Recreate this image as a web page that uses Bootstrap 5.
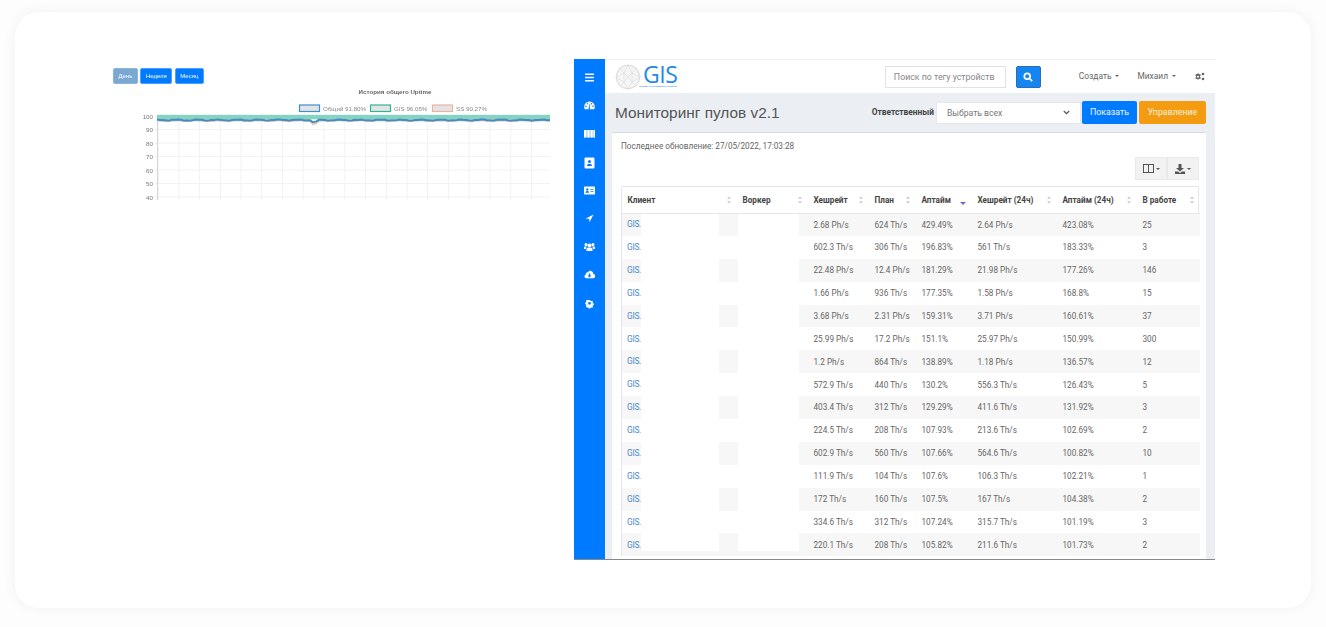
<!DOCTYPE html>
<html lang="ru">
<head>
    <meta charset="UTF-8">
    <meta name="viewport" content="width=device-width, initial-scale=1.0">
    <title>Мониторинг пулов</title>
    <link href="https://cdn.jsdelivr.net/npm/bootstrap@5.3.2/dist/css/bootstrap.min.css" rel="stylesheet">
    <style>
        html, body { height: 100%; overflow: hidden; }
        body { background: #fdfdfd; font-family: Roboto, "Liberation Sans", sans-serif; }
        .sheet { margin: 12px 15px 0; width: 1296px; height: 596px; background: #fff; border-radius: 24px; box-shadow: 0 0 14px rgba(0,0,0,.05); padding: 47px 95px 0 98px; gap: 24px; }
        /* left chart */
        .uptime { width: 437px; font-family: "Liberation Sans", sans-serif; filter: blur(.35px); padding-top: 9px; }
        .range-row { gap: 2.5px; }
        .range-btn { font-size: 6px; line-height: 13px; padding: 1px 4.5px; height: 15.5px; border-radius: 2px; background: #007bff; color: #fff; border: 1px solid #4d9fff; }
        .range-btn.off { background: #7ba7d3; border-color: #8db4dc; }
        .uptime svg { display: block; margin-top: -1px; }
        /* right app */
        .app { width: 641px; height: 501px; overflow: hidden; font-size: 8.2px; color: #666; border-bottom: 1px solid #888; }
        .rail { width: 31px; background: #007bff; padding-top: 11px; gap: 13.2px; }
        .rail svg { width: 11px; height: 15px; fill: #fff; display: block; }
        .main-col { background: #ebeff4; min-width: 0; }
        .topbar { height: 34px; background: #fff; border-top: 1px solid #eee; padding: 0 10px; }
        .logo-text { font-family: "Open Sans", sans-serif; font-size: 23px; line-height: 17px; height: 17px; color: #2389e8; letter-spacing: -.5px; margin: -4px 0 0 2px; }
        .logo-sub { position: absolute; left: 24px; top: 21px; font-size: 2.5px; line-height: 3px; color: #2389e8; white-space: nowrap; }
        .tag-search { width: 121px; height: 22px; border: 1px solid #dfe3e8; padding: 0 8px; font-size: 8.8px; line-height: 20px; color: #888; }
        .search-btn { width: 25px; height: 22px; background: #1585f2; border-radius: 2px; border: 1px solid #2a6fb5; margin-left: 10px; }
        .top-link { color: #666; font-size: 8.4px; }
        .top-link::after { content: ""; display: inline-block; border: 2.5px solid transparent; border-top-color: #666; border-bottom: 0; margin-left: 4px; vertical-align: 2px; }
        .link-create { margin-left: 38px; }
        .link-user { margin-left: 18px; }
        .gear-top { margin-left: 19px; }
        .title-row { height: 39px; padding: 0 9px 0 10px; }
        .page-title { font-family: "Liberation Sans", sans-serif; font-size: 15.4px; font-weight: 400; color: #555; margin: 0; line-height: 1; }
        .resp-label { font-size: 8.4px; font-weight: 700; color: #444; margin-right: 2px; }
        .resp-select { width: 145px; height: 22px; background: #fff; border: 1px solid #e4e7eb; padding: 0 10px; font-size: 8.6px; line-height: 20px; color: #777; }
        .act-btn { height: 23px; width: 55px; border-radius: 2px; font-size: 8.8px; line-height: 23px; text-align: center; color: #f2f7ff; background: #007bff; margin-left: 1px; }
        .act-btn.orange { background: #f39c12; width: 67px; margin-left: 2px; color: #fdf0dc; }
        .sheet-card { margin: 0 9px 0 7px; background: #fff; border-top: 1px solid #d8dce1; padding: 7px 7px 0 9px; position: relative; flex: 1; overflow: hidden; }
        .stamp { line-height: 12px; }
        .tool-btns { height: 23px; margin: 5px 0 6px; }
        .tool-btn { height: 23px; width: 32px; background: #f2f2f2; border: 1px solid #e9e9e9; display: flex; align-items: center; justify-content: center; gap: 2px; }
        .tool-btn svg { fill: #555; display: block; }
        .tool-caret { border: 2px solid transparent; border-top-color: #555; border-bottom: 0; }
        .pool-wrap { position: relative; border: 1px solid #e6e6e6; border-bottom: 0; border-radius: 2px 2px 0 0; }
        .pool-table { width: 578px; table-layout: fixed; margin: 0; font-size: 8.2px; }
        .pool-table th { height: 26px; padding: 0 5.500px; font-size: 8.2px; font-weight: 700; color: #444; vertical-align: middle; border-bottom: 1px solid #e6e6e6; position: relative; white-space: nowrap; }
        .pool-table th::after { content: ""; position: absolute; right: 6px; top: 9px; width: 0; height: 0; border: 2.5px solid transparent; border-bottom: 3px solid #d4d4d4; border-top: 0; }
        .pool-table th::before { content: ""; position: absolute; right: 6px; top: 13.5px; width: 0; height: 0; border: 2.5px solid transparent; border-top: 3px solid #d4d4d4; border-bottom: 0; }
        .pool-table th.sorted::after { display: none; }
        .pool-table th.sorted::before { border-top-color: #6c6cc8; top: 15px; border-width: 3px 3px 0; }
        .pool-table td { height: 22.9px; padding: 0 5.500px; color: #666; vertical-align: middle; border: 0; white-space: nowrap; background: #fff; }
        .pool-table tr:nth-child(odd) td { background: #f7f7f7; }
        .pool-table a { color: #4a8bcc; text-decoration: none; font-size: 8.4px; letter-spacing: -.3px; margin-left: -.5px; }
        .hide-client { position: absolute; left: 19px; top: 27px; width: 78px; height: 337px; background: #fff; }
        .hide-worker { position: absolute; left: 116px; top: 27px; width: 61px; height: 337px; background: #fff; }
    </style>
</head>
<body>
    <div class="sheet d-flex align-items-start">
        <div class="uptime">
            <div class="range-row d-flex">
                <button class="range-btn off">День</button>
                <button class="range-btn">Неделя</button>
                <button class="range-btn">Месяц</button>
            </div>
            <svg id="chart" width="437" height="124" viewBox="113 83 437 124" font-family="Liberation Sans, sans-serif">
                <text x="395" y="93.500" text-anchor="middle" font-size="6.200" font-weight="700" fill="#666">История общего Uptime</text>
                <rect x="299.500" y="105" width="20" height="6.500" fill="#e3e3e3" stroke="#3b8fcb" stroke-width="1.200"/>
                <text x="323" y="110.500" font-size="6.200" fill="#888">Общий 91.80%</text>
                <rect x="370.500" y="105" width="20" height="6.500" fill="#e3e3e3" stroke="#2fb39b" stroke-width="1.200"/>
                <text x="394" y="110.500" font-size="6.200" fill="#888">GIS 96.05%</text>
                <rect x="432.500" y="105" width="20" height="6.500" fill="#e3e3e3" stroke="#eab3a3" stroke-width="1.200"/>
                <text x="456" y="110.500" font-size="6.200" fill="#888">SS 90.27%</text>
                <g font-size="6.200" fill="#777" text-anchor="end">
                    <text x="153" y="118.500">100</text><text x="153" y="132">90</text><text x="153" y="145.500">80</text>
                    <text x="153" y="159">70</text><text x="153" y="172.500">60</text><text x="153" y="186">50</text><text x="153" y="199.500">40</text>
                </g>
                <g id="grid" stroke="#efefef" stroke-width=".8"></g>
                <line x1="157.500" y1="115" x2="157.500" y2="200" stroke="#d8d8d8" stroke-width="1.200"/>
                <rect x="157" y="114.800" width="393" height="4.500" fill="#86d3c0"/>
                <polyline id="lineSs" fill="none" stroke="#eab3a3" stroke-width="1.200"/>
                <polyline id="lineAll" fill="none" stroke="#3b8fcb" stroke-width="2"/>
            </svg>
        </div>

        <div class="app d-flex">
            <div class="rail d-flex flex-column align-items-center flex-shrink-0">
                <svg viewBox="0 0 11 15"><path d="M1 3.500h9v1.500H1zM1 6.700h9v1.500H1zM1 10h9v1.500H1z"/></svg>
                <svg viewBox="0 0 11 15"><path fill-rule="evenodd" d="M5.500 3.500A5.300 5.300 0 0 0 .2 8.800c0 .9.200 1.700.6 2.400h9.400c.4-.7.600-1.500.6-2.400a5.300 5.300 0 0 0-5.300-5.300zM2 7.500a.8.800 0 1 1 0 1.600.8.800 0 0 1 0-1.600zM9 7.500a.8.800 0 1 1 0 1.600.8.800 0 0 1 0-1.600zM3.600 5a.7.700 0 1 1 0 1.400.7.700 0 0 1 0-1.400zM7.400 5a.7.700 0 1 1 0 1.400.7.700 0 0 1 0-1.400zM4.700 10l1-4 .6.200-.6 3.800a.8.8 0 1 1-1 0z"/></svg>
                <svg viewBox="0 0 11 15"><path opacity=".75" d="M0 4h11v7.500H0z"/><path d="M0 4h2v7.500H0zM3.800 4h1.400v7.500H3.800zM7 4h1.400v7.500H7zM9.800 4H11v7.500H9.800z"/></svg>
                <svg viewBox="0 0 11 15"><path fill-rule="evenodd" d="M1.500 2.500h8a1 1 0 0 1 1 1v9a1 1 0 0 1-1 1h-8a1 1 0 0 1-1-1v-9a1 1 0 0 1 1-1zM5.500 5a1.500 1.500 0 1 0 0 3 1.500 1.500 0 0 0 0-3zM3 11h5c0-1.500-1-2.300-2.500-2.300S3 9.500 3 11z"/></svg>
                <svg viewBox="0 0 11 15"><path fill-rule="evenodd" d="M.8 3.500h9.400a.8.800 0 0 1 .8.800v6.400a.8.800 0 0 1-.8.800H.8a.8.800 0 0 1-.8-.8V4.300a.8.800 0 0 1 .8-.8zM3.300 5.200a1.200 1.200 0 1 0 0 2.400 1.200 1.200 0 0 0 0-2.400zM1.400 9.800h3.800c0-1.200-.8-1.800-1.900-1.800s-1.900.6-1.900 1.800zM6.500 6v.8h3V6zM6.500 8v.8h3V8z"/></svg>
                <svg viewBox="0 0 11 15"><path d="M9.500 3.500 1.500 7.700h3.800v3.800z"/></svg>
                <svg viewBox="0 0 11 15"><path d="M5.500 4.500a2 2 0 1 0 0 4 2 2 0 0 0 0-4zM2 4a1.500 1.500 0 1 0 0 3A1.500 1.500 0 0 0 2 4zM9 4a1.500 1.500 0 1 0 0 3A1.500 1.500 0 0 0 9 4zM2.500 12h6V10c0-.8-.8-1.300-1.400-1.300H3.900c-.6 0-1.400.5-1.400 1.300zM0 10h2c0-1.200.3-2 1-2.600H.8C.3 7.400 0 7.800 0 8.300zM11 10H9c0-1.200-.3-2-1-2.600h2.200c.5 0 .8.400.8.900z"/></svg>
                <svg viewBox="0 0 11 15"><path fill-rule="evenodd" d="M9.200 7A2.800 2.800 0 0 0 4 5.300 2 2 0 0 0 1.800 7.400 2 2 0 0 0 2.200 11.300h6.600a2.100 2.100 0 0 0 .4-4.300zM4.800 6.500h1.400v2h1.300L5.500 10.600 3.500 8.500h1.300z"/></svg>
                <svg viewBox="-1.500 -2 14 19"><path fill-rule="evenodd" d="M4.500 3h2l.2 1.200 1 .4 1-.7 1.400 1.400-.7 1 .4 1 1.200.2v2l-1.200.2-.4 1 .7 1-1.400 1.400-1-.7-1 .4-.2 1.200h-2l-.2-1.200-1-.4-1 .7L.9 10.500l.7-1-.4-1L0 8.300v-2l1.200-.2.400-1-.7-1L2.300 2.700l1 .7 1-.4zM5.500 5.500a1.800 1.800 0 1 0 0 3.600 1.800 1.800 0 0 0 0-3.600z"/></svg>
            </div>

            <div class="main-col flex-grow-1 d-flex flex-column">
                <div class="topbar d-flex align-items-center flex-shrink-0">
                    <div class="d-flex align-items-center position-relative">
                        <svg width="26" height="26" viewBox="0 0 26 26" fill="none" stroke="#d2d2d2" stroke-width=".5">
                            <circle cx="13" cy="13" r="12" fill="#f6f6f6"/>
                            <path d="M13 1 5 4 1 13l4 9 8 3 8-3 4-9-4-9zM5 4l4 5 4-8 4 8 4-5M1 13l8-4 4 4 4-4 8 4M1 13l8 5 4-5 4 5 8-5M5 22l4-4 4 7 4-7 4 4M9 9v9M17 9v9"/>
                        </svg>
                        <span class="logo-text">GIS</span>
                        <span class="logo-sub">GLOBAL INFORMATION SYSTEMS</span>
                    </div>
                    <div class="tag-search ms-auto">Поиск по тегу устройств</div>
                    <div class="search-btn d-flex align-items-center justify-content-center">
                        <svg width="10" height="10" viewBox="0 0 10 10" fill="none" stroke="#fff" stroke-width="1.700"><circle cx="4.200" cy="4.200" r="2.900"/><path d="m6.500 6.500 2.700 2.700"/></svg>
                    </div>
                    <span class="top-link link-create">Создать</span>
                    <span class="top-link link-user">Михаил</span>
                    <svg class="gear-top" width="10" height="9" viewBox="0 0 10 9" fill="#666"><path fill-rule="evenodd" d="M3.500 1.500 4.300 2.300l1-.2.500 1.300-.8.700v.9l.8.700-.5 1.300-1-.2-.8.800H2.500l-.6-.8-1 .2-.5-1.300.7-.7V4.100L.4 3.400l.5-1.300 1 .2.600-.8zM3 3.700a1 1 0 1 0 0 2 1 1 0 0 0 0-2z"/><circle cx="8" cy="2" r="1.300"/><circle cx="8" cy="7" r="1.300"/></svg>
                </div>
                <div class="title-row d-flex align-items-center flex-shrink-0">
                    <h1 class="page-title">Мониторинг пулов v2.1</h1>
                    <span class="resp-label ms-auto">Ответственный</span>
                    <div class="resp-select d-flex align-items-center justify-content-between">
                        Выбрать всех
                        <svg width="7" height="5" viewBox="0 0 7 5" fill="none" stroke="#555" stroke-width="1.200"><path d="m.8 1 2.700 2.700L6.200 1"/></svg>
                    </div>
                    <span class="act-btn">Показать</span>
                    <span class="act-btn orange">Управление</span>
                </div>
                <div class="sheet-card">
                    <div class="stamp">Последнее обновление: 27/05/2022, 17:03:28</div>
                    <div class="tool-btns d-flex justify-content-end">
                        <div class="tool-btn">
                            <svg width="11" height="9" viewBox="0 0 11 9"><path fill-rule="evenodd" d="M0 0h11v9H0zM1 1v7h4V1zm5 0v7h4V1z"/></svg>
                            <span class="tool-caret"></span>
                        </div>
                        <div class="tool-btn">
                            <svg width="10" height="10" viewBox="0 0 10 10"><path d="M3.500 0h3v4H9L5 7.500 1 4h2.500zM0 7.500h3L5 9l2-1.500h3V10H0z"/></svg>
                            <span class="tool-caret"></span>
                        </div>
                    </div>
                    <div class="pool-wrap">
                        <table class="pool-table table">
                            <colgroup>
                                <col style="width:115px"><col style="width:71px"><col style="width:61px"><col style="width:47px">
                                <col style="width:56px"><col style="width:85px"><col style="width:80px"><col style="width:63px">
                            </colgroup>
                            <thead>
                                <tr><th>Клиент</th><th>Воркер</th><th>Хешрейт</th><th>План</th><th class="sorted">Аптайм</th><th>Хешрейт (24ч)</th><th>Аптайм (24ч)</th><th>В работе</th></tr>
                            </thead>
                            <tbody>
                                <tr><td><a href="#">GIS.</a></td><td></td><td>2.68 Ph/s</td><td>624 Th/s</td><td>429.49%</td><td>2.64 Ph/s</td><td>423.08%</td><td>25</td></tr>
                                <tr><td><a href="#">GIS.</a></td><td></td><td>602.3 Th/s</td><td>306 Th/s</td><td>196.83%</td><td>561 Th/s</td><td>183.33%</td><td>3</td></tr>
                                <tr><td><a href="#">GIS.</a></td><td></td><td>22.48 Ph/s</td><td>12.4 Ph/s</td><td>181.29%</td><td>21.98 Ph/s</td><td>177.26%</td><td>146</td></tr>
                                <tr><td><a href="#">GIS.</a></td><td></td><td>1.66 Ph/s</td><td>936 Th/s</td><td>177.35%</td><td>1.58 Ph/s</td><td>168.8%</td><td>15</td></tr>
                                <tr><td><a href="#">GIS.</a></td><td></td><td>3.68 Ph/s</td><td>2.31 Ph/s</td><td>159.31%</td><td>3.71 Ph/s</td><td>160.61%</td><td>37</td></tr>
                                <tr><td><a href="#">GIS.</a></td><td></td><td>25.99 Ph/s</td><td>17.2 Ph/s</td><td>151.1%</td><td>25.97 Ph/s</td><td>150.99%</td><td>300</td></tr>
                                <tr><td><a href="#">GIS.</a></td><td></td><td>1.2 Ph/s</td><td>864 Th/s</td><td>138.89%</td><td>1.18 Ph/s</td><td>136.57%</td><td>12</td></tr>
                                <tr><td><a href="#">GIS.</a></td><td></td><td>572.9 Th/s</td><td>440 Th/s</td><td>130.2%</td><td>556.3 Th/s</td><td>126.43%</td><td>5</td></tr>
                                <tr><td><a href="#">GIS.</a></td><td></td><td>403.4 Th/s</td><td>312 Th/s</td><td>129.29%</td><td>411.6 Th/s</td><td>131.92%</td><td>3</td></tr>
                                <tr><td><a href="#">GIS.</a></td><td></td><td>224.5 Th/s</td><td>208 Th/s</td><td>107.93%</td><td>213.6 Th/s</td><td>102.69%</td><td>2</td></tr>
                                <tr><td><a href="#">GIS.</a></td><td></td><td>602.9 Th/s</td><td>560 Th/s</td><td>107.66%</td><td>564.6 Th/s</td><td>100.82%</td><td>10</td></tr>
                                <tr><td><a href="#">GIS.</a></td><td></td><td>111.9 Th/s</td><td>104 Th/s</td><td>107.6%</td><td>106.3 Th/s</td><td>102.21%</td><td>1</td></tr>
                                <tr><td><a href="#">GIS.</a></td><td></td><td>172 Th/s</td><td>160 Th/s</td><td>107.5%</td><td>167 Th/s</td><td>104.38%</td><td>2</td></tr>
                                <tr><td><a href="#">GIS.</a></td><td></td><td>334.6 Th/s</td><td>312 Th/s</td><td>107.24%</td><td>315.7 Th/s</td><td>101.19%</td><td>3</td></tr>
                                <tr><td><a href="#">GIS.</a></td><td></td><td>220.1 Th/s</td><td>208 Th/s</td><td>105.82%</td><td>211.6 Th/s</td><td>101.73%</td><td>2</td></tr>
                            </tbody>
                        </table>
                        <div class="hide-client"></div>
                        <div class="hide-worker"></div>
                    </div>
                </div>
            </div>
        </div>
    </div>

    <script src="https://cdn.jsdelivr.net/npm/bootstrap@5.3.2/dist/js/bootstrap.bundle.min.js"></script>
    <script>
        // chart grid and lines
        var ns = 'http://www.w3.org/2000/svg';
        var grid = document.getElementById('grid');
        function gridLine(x1, y1, x2, y2) {
            var l = document.createElementNS(ns, 'line');
            l.setAttribute('x1', x1); l.setAttribute('y1', y1);
            l.setAttribute('x2', x2); l.setAttribute('y2', y2);
            grid.appendChild(l);
        }
        for (var y = 116; y <= 197; y += 13.5) gridLine(154, y, 550, y);
        for (var x = 158; x <= 550; x += 20.75) gridLine(x, 115, x, 200);

        function wave(base, amp, dip) {
            var pts = [];
            for (var x = 157; x <= 550; x += 3) {
                var v = base + Math.sin(x * 0.31) * amp + Math.sin(x * 0.83) * amp * 0.5;
                if (Math.abs(x - 315) < 3) v += dip;
                pts.push(x + ',' + v.toFixed(1));
            }
            return pts.join(' ');
        }
        document.getElementById('lineSs').setAttribute('points', wave(121, 0.4, 3));
        document.getElementById('lineAll').setAttribute('points', wave(120, 0.4, 2));
    </script>
</body>
</html>
